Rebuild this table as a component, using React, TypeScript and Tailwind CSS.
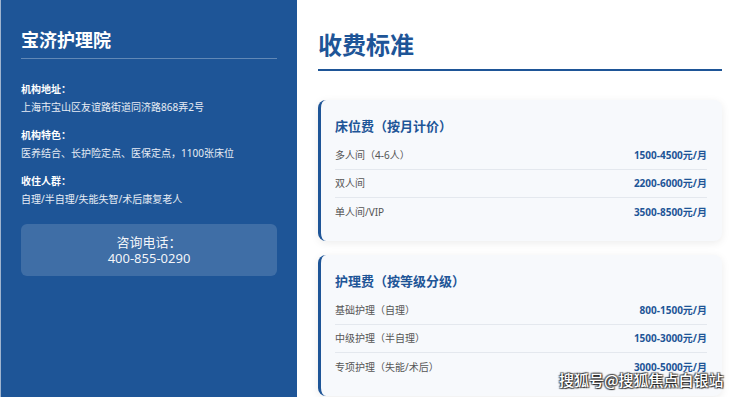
import React from "react";

const font = { fontFamily: "'Noto Sans', 'Noto Sans CJK SC', sans-serif" };

const info = [
  { label: "机构地址：", value: "上海市宝山区友谊路街道同济路868弄2号" },
  { label: "机构特色：", value: "医养结合、长护险定点、医保定点，1100张床位" },
  { label: "收住人群：", value: "自理/半自理/失能失智/术后康复老人" },
];

const cards = [
  {
    title: "床位费（按月计价）",
    rows: [
      ["多人间（4-6人）", "1500-4500元/月"],
      ["双人间", "2200-6000元/月"],
      ["单人间/VIP", "3500-8500元/月"],
    ],
  },
  {
    title: "护理费（按等级分级）",
    rows: [
      ["基础护理（自理）", "800-1500元/月"],
      ["中级护理（半自理）", "1500-3000元/月"],
      ["专项护理（失能/术后）", "3000-5000元/月"],
    ],
  },
];

export default function App() {
  return (
    <div
      className="relative flex w-[740px] h-[397px] overflow-hidden bg-white"
      style={font}
    >
      <aside className="w-[297px] shrink-0 bg-[#1e5597] border-l border-[#9fb4cf] pl-[20px] pr-[20px] pt-[28px] text-white">
        <h1 className="text-[18px] leading-[24px] font-bold pb-[6px] border-b border-white/30">
          宝济护理院
        </h1>
        <div className="mt-[23px] flex flex-col gap-[14px]">
          {info.map((it) => (
            <div key={it.label} className="flex flex-col gap-[4px]">
              <div className="text-[10px] leading-[14px] font-bold">{it.label}</div>
              <div className="text-[10px] leading-[14px] text-white/90">{it.value}</div>
            </div>
          ))}
        </div>
        <div className="mt-[18px] rounded-[6px] bg-white/15 py-[10px] text-center text-[13px] leading-[16px] text-white/95">
          <div>咨询电话：</div>
          <div>400-855-0290</div>
        </div>
      </aside>
      <main className="flex-1 pl-[21px] pr-[18px] pt-[30px]">
        <h2 className="text-[24px] leading-[29px] font-bold text-[#1e5597] pb-[10px] border-b-2 border-[#1e5597]">
          收费标准
        </h2>
        <div className="mt-[29px] flex flex-col gap-[14px]">
          {cards.map((c) => (
            <section
              key={c.title}
              className="rounded-[8px] border-l-[3px] border-[#1e5597] bg-[#f7f9fc] pl-[14px] pr-[15px] pt-[17px] pb-[15px] shadow-[0_2px_8px_rgba(0,0,0,0.08)]"
            >
              <h3 className="text-[13px] leading-[18px] font-bold text-[#1e5597] mb-[7px]">
                {c.title}
              </h3>
              <div className="flex flex-col">
                {c.rows.map(([name, price], i) => (
                  <div
                    key={name}
                    className={
                      i < c.rows.length - 1
                        ? "flex h-[28px] items-center justify-between border-b border-[#e4e8ee]"
                        : "flex h-[28px] items-center justify-between"
                    }
                  >
                    <span className="text-[10px] text-[#555555]">{name}</span>
                    <span className="text-[10px] font-bold text-[#1e5597]">{price}</span>
                  </div>
                ))}
              </div>
            </section>
          ))}
        </div>
      </main>
      <div
        className="absolute left-[559px] top-[370px] text-[15px] leading-[20px] font-medium text-white whitespace-nowrap"
        style={{
          fontFamily: "'Noto Sans CJK SC', sans-serif",
          textShadow:
            "0 0 1px #333, 1px 1px 1px rgba(0,0,0,0.7), -1px -1px 1px rgba(0,0,0,0.5), 1px -1px 1px rgba(0,0,0,0.5), -1px 1px 1px rgba(0,0,0,0.5)",
        }}
      >
        搜狐号@搜狐焦点白银站
      </div>
    </div>
  );
}
